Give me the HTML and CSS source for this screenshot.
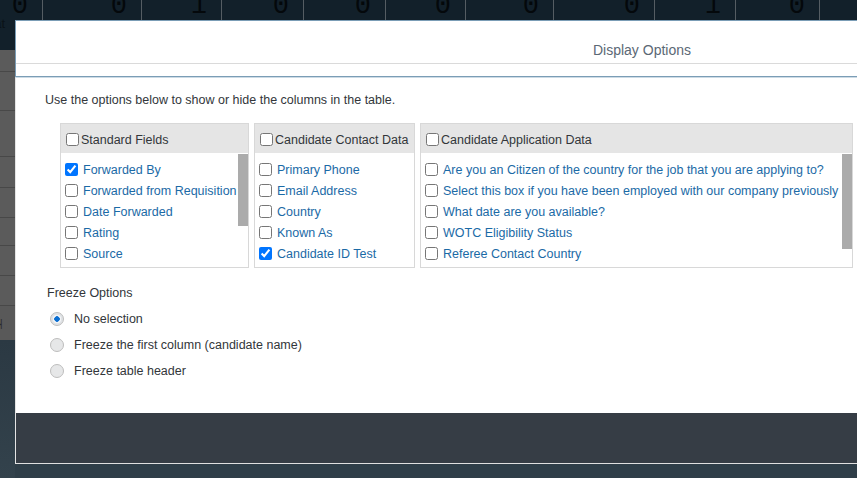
FILE: index.html
```html
<!DOCTYPE html>
<html lang="en">
<head>
<meta charset="utf-8">
<title>Display Options</title>
<link rel="stylesheet" href="styles.css">
</head>
<body>
<div class="page">
  <div class="grid-head">
    <div class="cell"><span class="num">0</span><span class="lbl">Allocat</span></div>
    <div class="cell"><span class="num">0</span></div>
    <div class="cell"><span class="num">1</span></div>
    <div class="cell"><span class="num">0</span></div>
    <div class="cell"><span class="num">0</span></div>
    <div class="cell"><span class="num">0</span></div>
    <div class="cell"><span class="num">0</span></div>
    <div class="cell"><span class="num">0</span></div>
    <div class="cell"><span class="num">1</span></div>
    <div class="cell"><span class="num">0</span></div>
    <div class="cell cell-last"></div>
  </div>
  <div class="grid-rows">
    <div class="row r1"></div>
    <div class="row r2"></div>
    <div class="row r3"></div>
    <div class="row r4"></div>
    <div class="row r5"></div>
    <div class="row r6"></div>
    <div class="row r7"></div>
    <div class="row r8"></div>
    <div class="row r9"><span class="pager">&#9654;|</span></div>
  </div>
  <div class="page-foot"></div>
</div>

<div class="modal" role="dialog" aria-label="Display Options">
  <div class="modal-head">
    <div class="title-bar"><h1 class="title">Display Options</h1></div>
    <div class="sub-bar"></div>
  </div>
  <div class="modal-body">
    <p class="intro">Use the options below to show or hide the columns in the table.</p>
    <div class="groups">
      <section class="group g1">
        <label class="group-head"><input type="checkbox">Standard Fields</label>
        <div class="group-list">
          <label class="item"><input type="checkbox" checked>Forwarded By</label>
          <label class="item"><input type="checkbox">Forwarded from Requisition</label>
          <label class="item"><input type="checkbox">Date Forwarded</label>
          <label class="item"><input type="checkbox">Rating</label>
          <label class="item"><input type="checkbox">Source</label>
        </div>
        <div class="thumb thumb-1"></div>
      </section>
      <section class="group g2">
        <label class="group-head"><input type="checkbox">Candidate Contact Data</label>
        <div class="group-list">
          <label class="item"><input type="checkbox">Primary Phone</label>
          <label class="item"><input type="checkbox">Email Address</label>
          <label class="item"><input type="checkbox">Country</label>
          <label class="item"><input type="checkbox">Known As</label>
          <label class="item"><input type="checkbox" checked>Candidate ID Test</label>
        </div>
      </section>
      <section class="group g3">
        <label class="group-head"><input type="checkbox">Candidate Application Data</label>
        <div class="group-list">
          <label class="item"><input type="checkbox">Are you an Citizen of the country for the job that you are applying to?</label>
          <label class="item"><input type="checkbox">Select this box if you have been employed with our company previously</label>
          <label class="item"><input type="checkbox">What date are you available?</label>
          <label class="item"><input type="checkbox">WOTC Eligibility Status</label>
          <label class="item"><input type="checkbox">Referee Contact Country</label>
        </div>
        <div class="thumb thumb-3"></div>
      </section>
    </div>
    <div class="freeze">
      <div class="freeze-label">Freeze Options</div>
      <label class="radio"><input type="radio" name="freeze" checked>No selection</label>
      <label class="radio"><input type="radio" name="freeze">Freeze the first column (candidate name)</label>
      <label class="radio"><input type="radio" name="freeze">Freeze table header</label>
    </div>
  </div>
  <div class="modal-foot"></div>
</div>
</body>
</html>
```

FILE: styles.css
```css
html, body {
  margin: 0;
  padding: 0;
  overflow: hidden;
  width: 857px;
  height: 478px;
}
body {
  background: #2f3e48;
  font-family: "Liberation Sans", Arial, sans-serif;
  position: relative;
}

/* background page (dimmed by overlay) */
.page {
  display: flex;
  flex-direction: column;
  height: 478px;
}
.grid-head {
  display: grid;
  grid-template-columns: 43px 99px 80px 82px 82px 80px 88px 101px 81px 84px 1fr;
  height: 50px;
  background: #12202a;
  overflow: hidden;
}
.cell {
  border-right: 1px solid #555d63;
  display: flex;
  flex-direction: column;
  align-items: flex-end;
  padding-right: 14px;
  overflow: hidden;
}
.cell-last { border-right: none; }
.num {
  font-family: "Liberation Mono", monospace;
  font-size: 27px;
  line-height: 27px;
  margin-top: -7px;
  color: #04080b;
}
.lbl {
  align-self: flex-start;
  margin-left: -34px;
  margin-top: -4px;
  font-size: 13px;
  color: #0a1217;
}
.grid-rows {
  display: flex;
  flex-direction: column;
  width: 15px;
  background: #5b5b5b;
}
.row {
  border-bottom: 1px solid #484848;
  box-sizing: border-box;
}
.r1 { height: 22px; }
.r2 { height: 39px; }
.r3 { height: 46px; }
.r4 { height: 31px; }
.r5 { height: 30px; }
.r6 { height: 28px; }
.r7 { height: 30px; }
.r8 { height: 30px; }
.r9 { height: 34px; border-bottom: none; background: #595959; }
.pager {
  display: block;
  font-size: 10px;
  color: #2a2a2a;
  margin-left: -6px;
  padding-top: 12px;
  letter-spacing: -2px;
}
.page-foot {
  flex: 1;
  width: 15px;
  background: linear-gradient(#2b3943, #33424c);
}

/* modal */
.modal {
  position: absolute;
  left: 15px;
  top: 20px;
  width: 1254px;
  display: flex;
  flex-direction: column;
  background: #fff;
}
.modal-head {
  border: 1px solid #7b9db6;
  box-shadow: 0 1px 0 #cddbe5;
  position: relative;
  z-index: 1;
}
.title-bar {
  height: 43px;
  box-sizing: border-box;
  border-bottom: 1px solid #dadada;
  padding-top: 21px;
  text-align: center;
}
.title {
  margin: 0;
  font-size: 14px;
  line-height: 17px;
  font-weight: normal;
  color: #5b6875;
}
.sub-bar { height: 12px; }

.modal-body {
  height: 336px;
  box-sizing: border-box;
  border-left: 1px solid #e4e4e4;
  padding: 16px 0 0 29px;
  color: #32363a;
}
.intro {
  margin: 0;
  font-size: 12.5px;
  line-height: 15px;
}
.groups {
  display: flex;
  gap: 5px;
  margin: 15px 0 0 15px;
}
.group {
  position: relative;
  box-sizing: border-box;
  height: 145px;
  border: 1px solid #d8d8d8;
  display: flex;
  flex-direction: column;
}
.g1 { width: 189px; }
.g2 { width: 161px; }
.g3 { width: 433px; }
.group-head {
  height: 29px;
  box-sizing: border-box;
  padding-top: 2px;
  flex: none;
  background: #e5e5e5;
  display: flex;
  align-items: center;
  gap: 2px;
  padding-left: 5px;
  font-size: 12.5px;
  color: #32363a;
  white-space: nowrap;
}
.group-list {
  flex: 1;
  padding-top: 5px;
  box-sizing: border-box;
  overflow: hidden;
}
.thumb {
  position: absolute;
  right: 0;
  top: 30px;
  width: 10px;
  background: #ababab;
}
.thumb-1 { height: 72px; }
.thumb-3 { height: 95px; }
.item {
  display: flex;
  align-items: center;
  gap: 5px;
  height: 21px;
  box-sizing: border-box;
  padding: 2px 0 0 4px;
  font-size: 12.5px;
  color: #1b6aa6;
  white-space: nowrap;
}
input[type="checkbox"] {
  margin: 0;
  width: 13px;
  height: 13px;
  flex: none;
}

.freeze {
  margin: 18px 0 0 2px;
  display: flex;
  flex-direction: column;
}
.freeze-label {
  font-size: 12.5px;
  line-height: 15px;
  margin-bottom: 5px;
}
.radio {
  display: flex;
  align-items: center;
  gap: 10px;
  height: 26px;
  box-sizing: border-box;
  padding: 0 0 0 3px;
  font-size: 12.5px;
  color: #32363a;
}
input[type="radio"] {
  appearance: none;
  -webkit-appearance: none;
  margin: 0;
  width: 14px;
  height: 14px;
  border-radius: 50%;
  border: 1px solid #bdbdbd;
  background: #e6e7e8;
  box-sizing: border-box;
  flex: none;
}
input[type="radio"]:checked {
  background: radial-gradient(circle, #0a6ed1 0 2.5px, #f2f4f6 3px 4px, #dfe2e5 4.5px);
}

.modal-foot {
  height: 51px;
  box-sizing: border-box;
  background: #363d45;
  border-left: 1px solid #e4e4e4;
  border-bottom: 1px solid #e0e0e0;
}
```
